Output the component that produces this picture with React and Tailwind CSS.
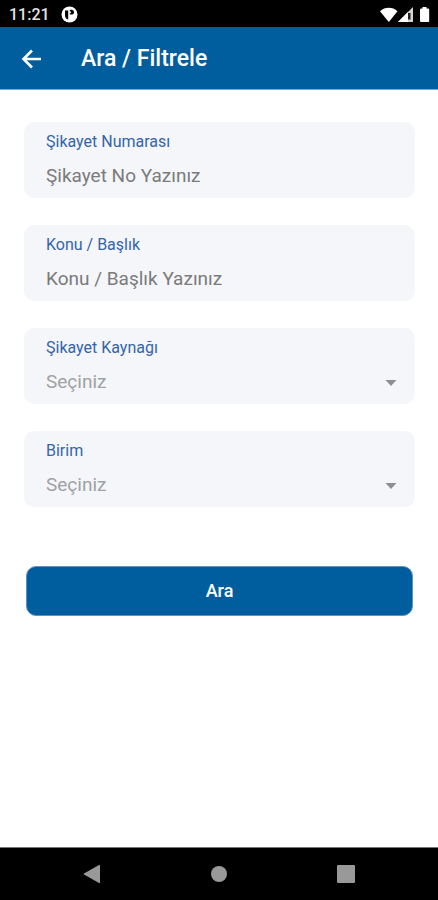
import { useState } from 'react';

const textFields = [
  { id: 'sikayetNo', label: 'Şikayet Numarası', placeholder: 'Şikayet No Yazınız' },
  { id: 'konu', label: 'Konu / Başlık', placeholder: 'Konu / Başlık Yazınız' },
];

const selectFields = [
  { id: 'kaynak', label: 'Şikayet Kaynağı' },
  { id: 'birim', label: 'Birim' },
];

function StatusBar() {
  return (
    <div className="flex h-[27px] items-center justify-between bg-black pl-[9px] pr-2 pt-[2px] text-white">
      <div className="flex items-center gap-[11px]">
        <span className="text-base leading-5 font-medium text-[#e4e4e4]">11:21</span>
        <svg width="17" height="17" viewBox="0 0 17 17" aria-hidden="true">
          <circle cx="8.5" cy="8.5" r="8" fill="#fff" />
          <path d="M4 4.500h3.200v9C5 13 4 11.500 4 9z" fill="#000" />
          <path d="M8.800 3.800h1.400c1.700 0 2.800 1 2.800 2.500S11.900 8.600 10.500 8.600H8.800z" fill="#000" />
          <circle cx="9" cy="6.200" r="1" fill="#fff" />
        </svg>
      </div>
      <svg width="50" height="16" viewBox="0 0 50 16" aria-hidden="true">
        <path d="M0 4.200C4.800-.4 12.700-.4 17.500 4.200L8.800 15z" fill="#fff" />
        <path d="M33 0v15H18z" fill="#d4d4d4" />
        <path d="M28 5v10H18z" fill="#fff" />
        <path d="M28 6h2.500v6.500H28z" fill="#222" />
        <path d="M42.500 0h4v1.500H48a1.200 1.200 0 0 1 1.200 1.200v11.300a1 1 0 0 1-1 1H41a1 1 0 0 1-1-1V2.700a1.200 1.200 0 0 1 1.200-1.200h1.300z" fill="#fff" />
      </svg>
    </div>
  );
}

function Header() {
  return (
    <header className="flex h-[63px] items-center gap-[37px] border-b border-[#7da5ce] bg-[#005e9f] pl-5 pt-px text-white">
      <button type="button" aria-label="Geri">
        <svg width="24" height="24" viewBox="0 0 24 24" aria-hidden="true">
          <path d="M12 3.500 3.500 12l8.500 8.500M3.500 12H21" fill="none" stroke="#fff" strokeWidth="2.600" />
        </svg>
      </button>
      <h1 className="text-[23px] leading-7 font-medium">Ara / Filtrele</h1>
    </header>
  );
}

function Field({ id, label, children }) {
  return (
    <div className="h-[76px] rounded-[10px] bg-[#f4f6fa] px-[22px] pt-[10px]">
      <label htmlFor={id} className="block text-base leading-5 text-[#3565a8]">
        {label}
      </label>
      {children}
    </div>
  );
}

function NavBar() {
  return (
    <nav className="flex h-[53px] items-center justify-between border-t border-[#777] bg-black px-[83px]">
      <button type="button" aria-label="Geri dön">
        <svg width="18" height="20" viewBox="0 0 18 20" fill="#999" aria-hidden="true">
          <path d="M17 1.500v17a.7.700 0 0 1-1 .5L1 10.600a.7.700 0 0 1 0-1.200L16 1a.7.700 0 0 1 1 .5z" />
        </svg>
      </button>
      <button type="button" aria-label="Ana ekran">
        <span className="block size-4 rounded-full bg-[#999]" />
      </button>
      <button type="button" aria-label="Son uygulamalar">
        <span className="block size-[18px] rounded-[1px] bg-[#999]" />
      </button>
    </nav>
  );
}

export default function App() {
  const [filters, setFilters] = useState({ sikayetNo: '', konu: '', kaynak: '', birim: '' });

  const handleChange = (event) => {
    setFilters({ ...filters, [event.target.name]: event.target.value });
  };

  return (
    <div className="flex min-h-screen flex-col bg-white font-['Roboto',sans-serif]">
      <StatusBar />
      <Header />

      <form className="flex-1 pt-8 pr-[23px] pl-6" onSubmit={(event) => event.preventDefault()}>
        <div className="flex flex-col gap-[27px]">
          {textFields.map((field) => (
            <Field key={field.id} id={field.id} label={field.label}>
              <input
                id={field.id}
                name={field.id}
                value={filters[field.id]}
                onChange={handleChange}
                placeholder={field.placeholder}
                className="mt-3 block h-6 w-full text-[19px] leading-6 text-[#444] placeholder:text-[#7b7b7b] focus:outline-none"
              />
            </Field>
          ))}

          {selectFields.map((field) => (
            <Field key={field.id} id={field.id} label={field.label}>
              <div className="relative mt-3">
                <select
                  id={field.id}
                  name={field.id}
                  value={filters[field.id]}
                  onChange={handleChange}
                  className="block h-6 w-full appearance-none text-[19px] leading-6 text-[#a0a2a4] focus:outline-none"
                >
                  <option value="">Seçiniz</option>
                </select>
                <svg
                  className="pointer-events-none absolute top-[10px] right-[-4px]"
                  width="12"
                  height="6"
                  viewBox="0 0 12 6"
                  aria-hidden="true"
                >
                  <path d="M.5 0h11L6 6z" fill="#8e8f91" />
                </svg>
              </div>
            </Field>
          ))}
        </div>

        <div className="px-[2px] pt-[59px]">
          <button
            type="submit"
            className="h-[50px] w-full rounded-[10px] border border-[#5f92c4] bg-[#005e9f] text-lg leading-6 font-medium text-white"
          >
            Ara
          </button>
        </div>
      </form>

      <NavBar />
    </div>
  );
}
